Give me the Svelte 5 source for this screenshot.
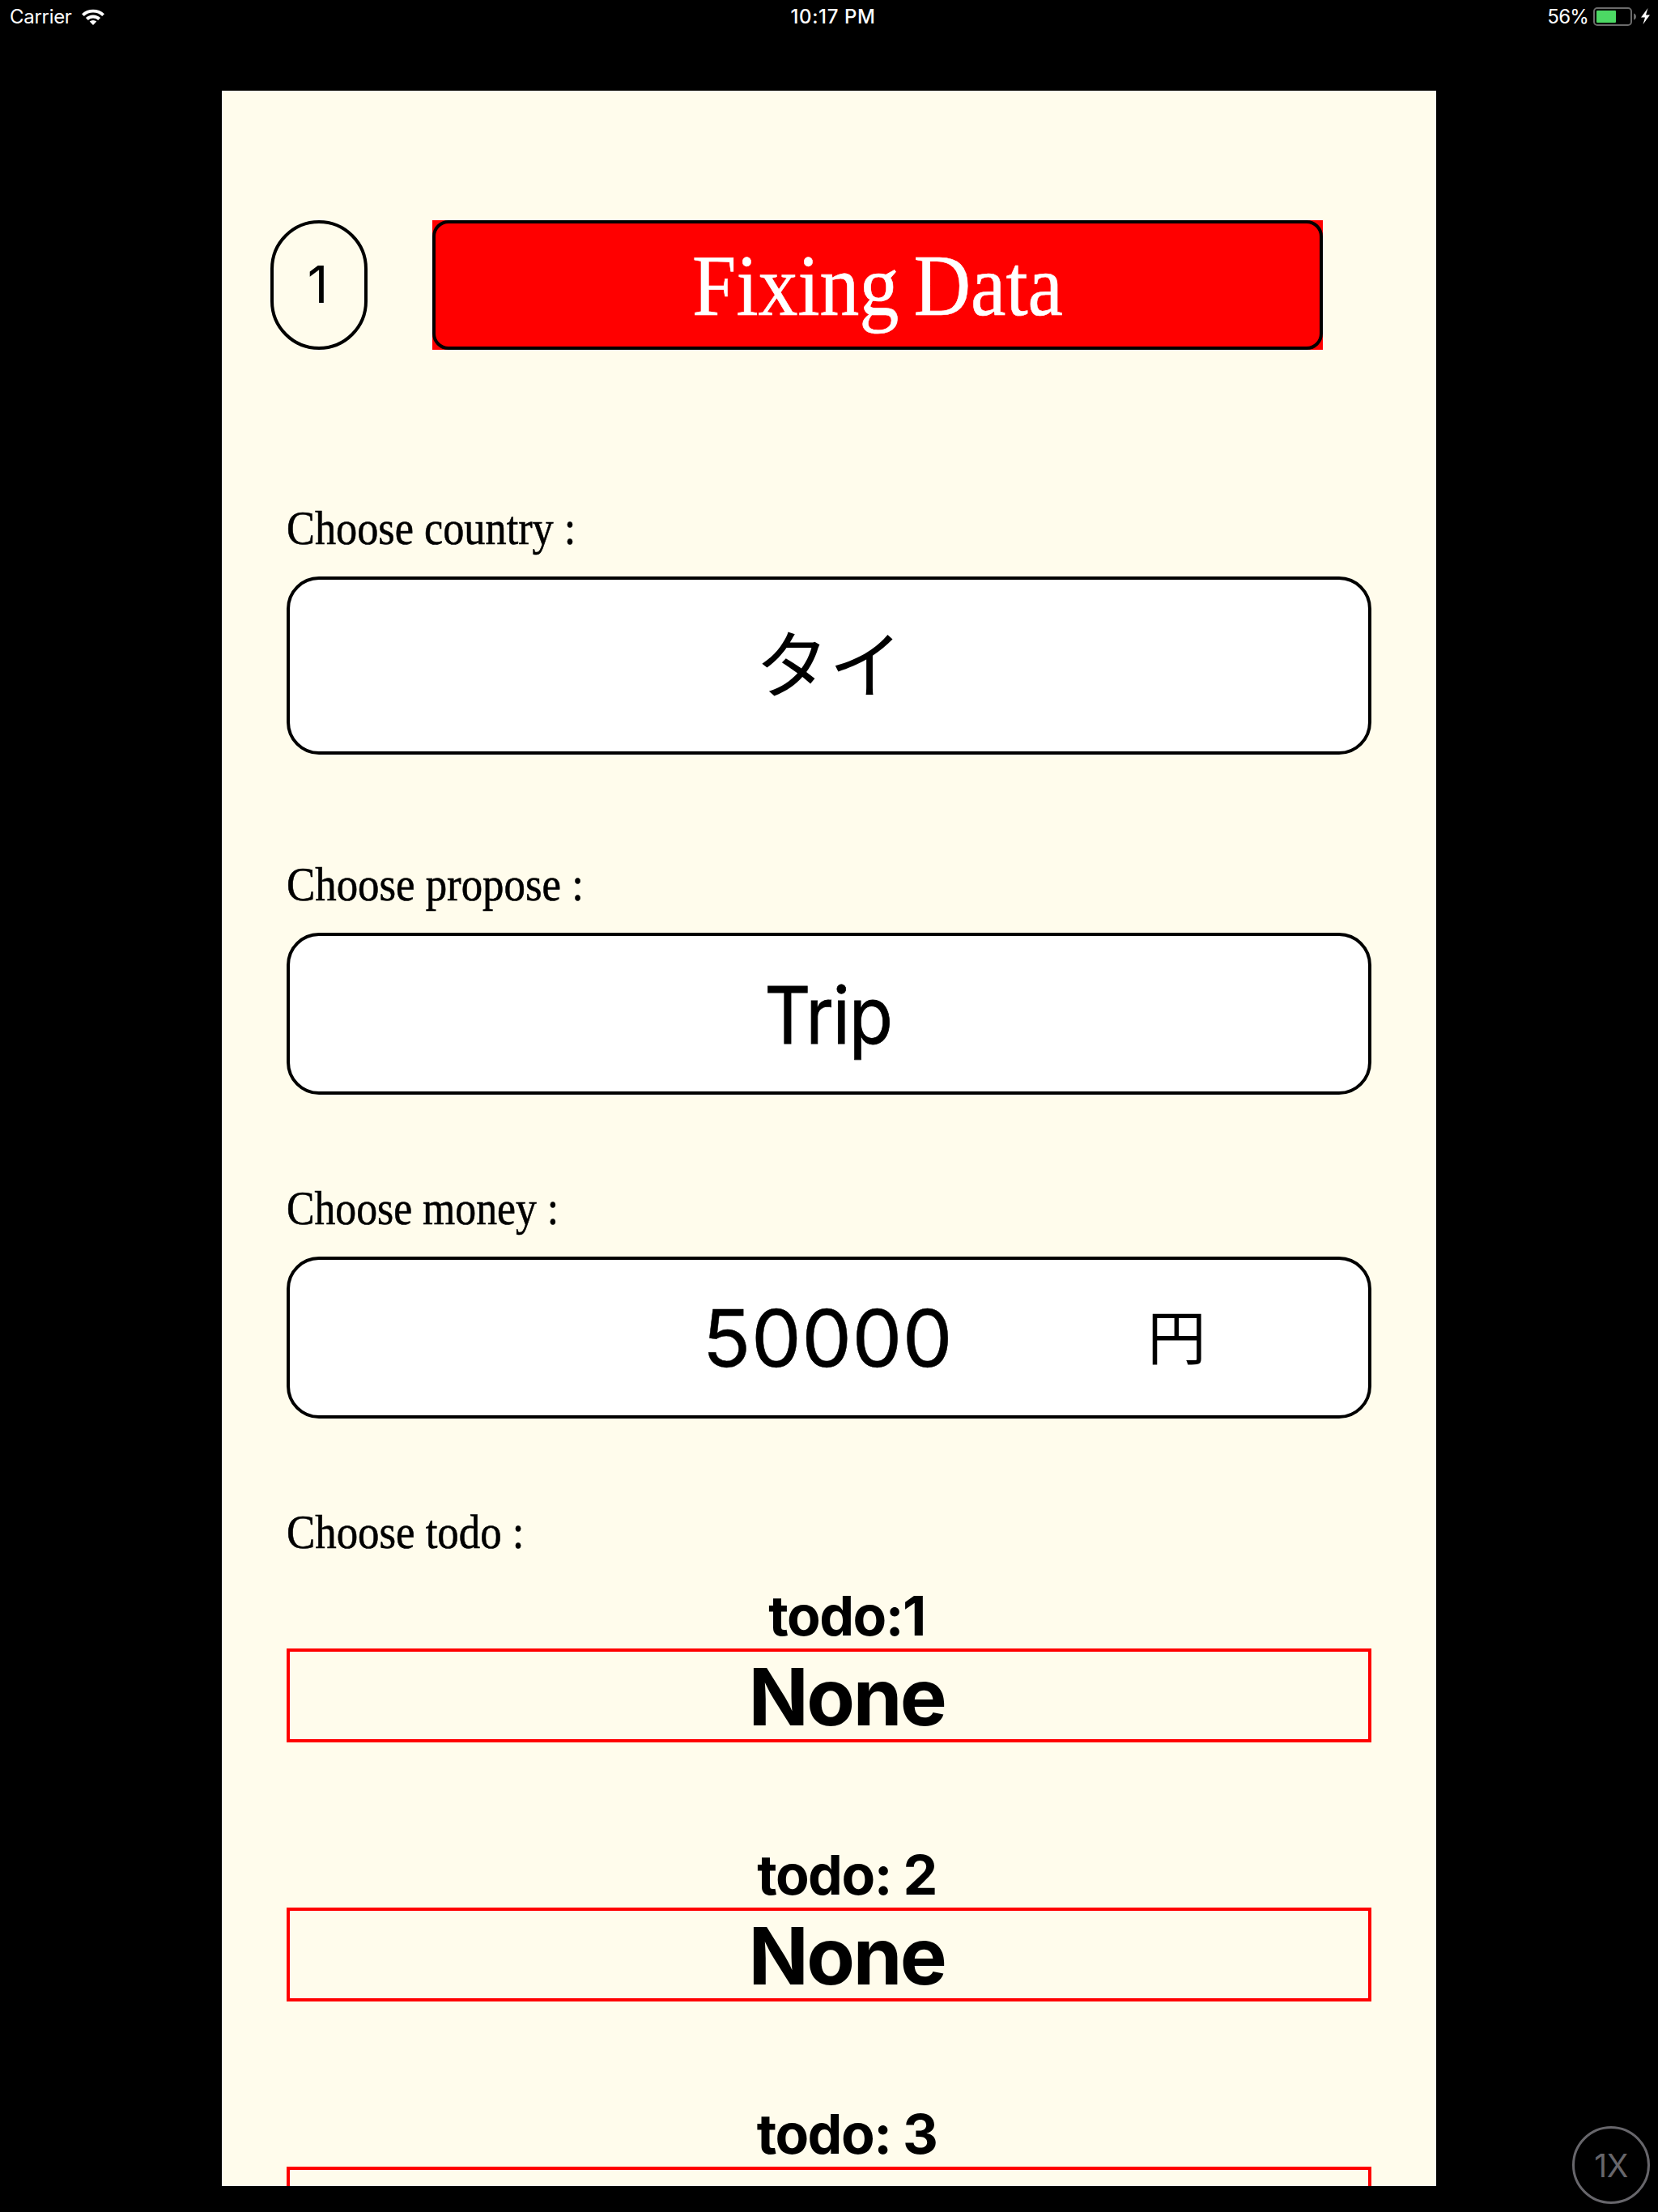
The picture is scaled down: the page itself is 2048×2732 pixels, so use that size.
<script>
  const fields = [
    { kind: 'country', label: 'Choose country :', value: 'タイ' },
    { kind: 'propose', label: 'Choose propose :', value: 'Trip' },
    { kind: 'money', label: 'Choose money :', value: '50000', unit: '円' }
  ];
  const todos = [
    { title: 'todo:1', value: 'None' },
    { title: 'todo: 2', value: 'None' },
    { title: 'todo: 3', value: 'None' }
  ];
</script>

<div class="screen">
  <header class="status">
    <div class="carrier">
      <span class="carrier-name">Carrier</span>
      <svg class="wifi" viewBox="0 0 28 20" width="28" height="20">
        <path d="M0 6.2 A20.5 20.5 0 0 1 28 6.2 L25.2 9 A16.5 16.5 0 0 0 2.8 9 Z" />
        <path d="M4.9 11 A13.3 13.3 0 0 1 23.1 11 L20.2 13.9 A9.2 9.2 0 0 0 7.8 13.9 Z" />
        <path d="M9.7 15.6 A6.6 6.6 0 0 1 18.3 15.6 L14 20 Z" />
      </svg>
    </div>
    <span class="clock">10:17 PM</span>
    <div class="power">
      <span class="percent">56%</span>
      <svg class="battery" viewBox="0 0 71 23" width="71" height="23">
        <rect x="1" y="1" width="46" height="21" rx="4" fill="none" stroke="#6b6b6b" stroke-width="2" />
        <rect x="4" y="4" width="24" height="15" rx="1" fill="#4cd964" />
        <path d="M50 7.5 Q53 8.5 53 11.5 Q53 14.500 50 15.500 Z" fill="#6b6b6b" />
        <path d="M67.500 1 L59 12.500 H64 L61.500 21 L70 9.500 H65 Z" fill="#fff" />
      </svg>
    </div>
  </header>

  <main class="panel">
    <div class="heading">
      <div class="step"><span>1</span></div>
      <div class="banner">
        <div class="banner-frame"><span class="banner-text">Fixing Data</span></div>
      </div>
    </div>

    {#each fields as field}
      <section class="field {field.kind}">
        <div class="label"><span>{field.label}</span></div>
        <div class="box">
          <span class="value">{field.value}</span>
          {#if field.unit}<span class="unit">{field.unit}</span>{/if}
        </div>
      </section>
    {/each}

    <section class="todos">
      <div class="label todo-label"><span>Choose todo :</span></div>
      {#each todos as todo}
        <div class="todo">
          <div class="todo-title">{todo.title}</div>
          <div class="todo-box">{todo.value}</div>
        </div>
      {/each}
    </section>
  </main>

  <div class="zoom">1X</div>
</div>

<style>
  :global(body) {
    margin: 0;
    background: #000;
  }
  .screen {
    position: relative;
    box-sizing: border-box;
    width: 2048px;
    height: 2732px;
    overflow: hidden;
    background: #000;
    color: #000;
    font-family: Inter, 'Noto Sans CJK JP', sans-serif;
  }
  .status {
    display: grid;
    grid-template-columns: 1fr auto 1fr;
    align-items: start;
    box-sizing: border-box;
    height: 112px;
    padding: 0 9px 0 12px;
    color: #fff;
    font-size: 24px;
    line-height: 41px;
    white-space: nowrap;
  }
  .carrier {
    display: flex;
    align-items: center;
    gap: 12px;
    height: 41px;
  }
  .carrier-name {
    width: 77px;
    letter-spacing: -0.3px;
  }
  .wifi {
    fill: #fff;
  }
  .clock {
    padding-left: 7px;
    font-weight: 500;
    letter-spacing: 0.6px;
  }
  .power {
    display: flex;
    justify-content: flex-end;
    align-items: center;
    gap: 6px;
    height: 41px;
  }
  .percent {
    letter-spacing: -0.8px;
  }
  .panel {
    box-sizing: border-box;
    width: 1500px;
    height: 2588px;
    margin: 0 auto;
    padding: 160px 80px 0;
    overflow: hidden;
    background: #fffcec;
  }
  .heading {
    display: flex;
    gap: 80px;
    height: 160px;
    margin: 0 60px 178px -20px;
  }
  .step {
    display: flex;
    align-items: center;
    justify-content: center;
    box-sizing: border-box;
    width: 120px;
    padding: 0 3px 2px 0;
    border: 4px solid #000;
    border-radius: 60px;
    font-size: 63px;
  }
  .banner {
    width: 1100px;
    background: #f00;
  }
  .banner-frame {
    display: flex;
    align-items: center;
    justify-content: center;
    box-sizing: border-box;
    height: 160px;
    padding-top: 3px;
    border: 4px solid #000;
    border-radius: 20px;
  }
  .banner-text {
    color: #fff;
    font: 108px/1.1 'Liberation Serif', serif;
    white-space: nowrap;
    word-spacing: -7px;
    -webkit-text-stroke: 0.6px #fff;
    transform: scaleX(0.905);
  }
  .label {
    box-sizing: border-box;
    height: 80px;
    padding-top: 3px;
    font: 58.5px/80px 'Liberation Serif', serif;
    white-space: nowrap;
    -webkit-text-stroke: 0.6px #000;
  }
  .label span {
    display: inline-block;
    transform: scaleX(0.903);
    transform-origin: left;
  }
  .country .label span {
    transform: scaleX(0.894);
  }
  .money .label span {
    transform: scaleX(0.884);
  }
  .box {
    display: grid;
    grid-template-columns: 1fr auto 1fr;
    align-items: center;
    box-sizing: border-box;
    height: 200px;
    margin: 22px 0 98px;
    border: 4px solid #000;
    border-radius: 40px;
    background: #fff;
    font-size: 98px;
  }
  .value {
    grid-column: 2;
  }
  .country .box {
    height: 220px;
    margin-bottom: 118px;
    padding-bottom: 15px;
  }
  .country .value {
    font-size: 91px;
  }
  .propose .box {
    padding: 2px 3px 0 0;
  }
  .propose .value {
    letter-spacing: -1.5px;
    transform: scaleX(0.905);
    -webkit-text-stroke: 0.8px #000;
  }
  .money .box {
    padding-right: 3px;
  }
  .money .value {
    letter-spacing: 0.5px;
    -webkit-text-stroke: 0.5px #000;
  }
  .unit {
    grid-column: 3;
    margin-left: 240px;
    padding-top: 2px;
    font-size: 72.5px;
    font-weight: 400;
    line-height: 1;
  }
  .todo-label {
    margin-bottom: 24px;
  }
  .todo {
    margin-bottom: 122px;
    text-align: center;
    font-weight: 700;
  }
  .todo-title {
    padding-left: 44px;
    font-size: 68px;
    line-height: 82px;
    letter-spacing: -1.5px;
  }
  .todo:first-of-type .todo-title {
    padding-left: 42px;
  }
  .todo-box {
    box-sizing: border-box;
    height: 116px;
    padding: 2px 0 0 44px;
    border: 4px solid #f00;
    font-size: 97.5px;
    line-height: 108px;
    letter-spacing: -2.5px;
  }
  .zoom {
    position: absolute;
    right: 10px;
    bottom: 10px;
    box-sizing: border-box;
    width: 96px;
    height: 96px;
    border: 3px solid #67666b;
    border-radius: 50%;
    color: #67666b;
    font-size: 39px;
    font-weight: 400;
    line-height: 91px;
    letter-spacing: -0.5px;
    text-align: center;
  }
</style>
